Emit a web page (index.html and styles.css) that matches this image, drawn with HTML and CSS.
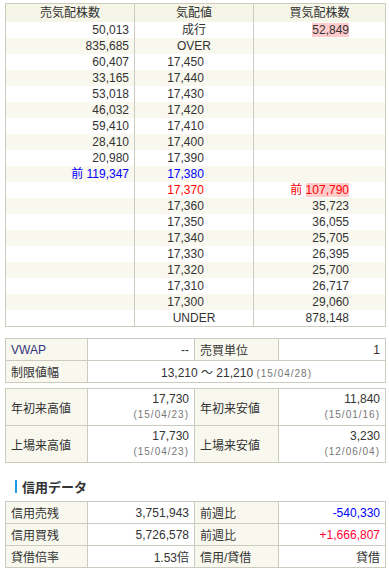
FILE: index.html
```html
<!DOCTYPE html>
<html lang="ja">
<head>
<meta charset="utf-8">
<link rel="stylesheet" href="styles.css">
</head>
<body>
<div class="wrap">
<table class="board">
  <colgroup><col class="c1"><col class="c2"><col class="c3"></colgroup>
  <thead>
    <tr><th>売気配株数</th><th>気配値</th><th>買気配株数</th></tr>
  </thead>
  <tbody>
    <tr><td class="sell">50,013</td><td class="price">成行</td><td class="buy"><span class="hl">52,849</span></td></tr>
    <tr><td class="sell">835,685</td><td class="price">OVER</td><td class="buy"></td></tr>
    <tr><td class="sell">60,407</td><td class="price"><span class="p">17,450</span></td><td class="buy"></td></tr>
    <tr><td class="sell">33,165</td><td class="price"><span class="p">17,440</span></td><td class="buy"></td></tr>
    <tr><td class="sell">53,018</td><td class="price"><span class="p">17,430</span></td><td class="buy"></td></tr>
    <tr><td class="sell">46,032</td><td class="price"><span class="p">17,420</span></td><td class="buy"></td></tr>
    <tr><td class="sell">59,410</td><td class="price"><span class="p">17,410</span></td><td class="buy"></td></tr>
    <tr><td class="sell">28,410</td><td class="price"><span class="p">17,400</span></td><td class="buy"></td></tr>
    <tr><td class="sell">20,980</td><td class="price"><span class="p">17,390</span></td><td class="buy"></td></tr>
    <tr><td class="sell blue">前 119,347</td><td class="price blue"><span class="p">17,380</span></td><td class="buy"></td></tr>
    <tr><td class="sell"></td><td class="price red"><span class="p">17,370</span></td><td class="buy red">前 <span class="hl">107,790</span></td></tr>
    <tr><td class="sell"></td><td class="price"><span class="p">17,360</span></td><td class="buy">35,723</td></tr>
    <tr><td class="sell"></td><td class="price"><span class="p">17,350</span></td><td class="buy">36,055</td></tr>
    <tr><td class="sell"></td><td class="price"><span class="p">17,340</span></td><td class="buy">25,705</td></tr>
    <tr><td class="sell"></td><td class="price"><span class="p">17,330</span></td><td class="buy">26,395</td></tr>
    <tr><td class="sell"></td><td class="price"><span class="p">17,320</span></td><td class="buy">25,700</td></tr>
    <tr><td class="sell"></td><td class="price"><span class="p">17,310</span></td><td class="buy">26,717</td></tr>
    <tr><td class="sell"></td><td class="price"><span class="p">17,300</span></td><td class="buy">29,060</td></tr>
    <tr><td class="sell"></td><td class="price">UNDER</td><td class="buy">878,148</td></tr>
  </tbody>
</table>

<table class="info info-a">
  <colgroup><col class="k1"><col class="v1"><col class="k2"><col class="v2"></colgroup>
  <tr><th class="vwap">VWAP</th><td>--</td><th>売買単位</th><td>1</td></tr>
  <tr><th>制限値幅</th><td colspan="3" class="center">13,210 〜 21,210 <span class="date">(15/04/28)</span></td></tr>
</table>

<table class="info info-b">
  <colgroup><col class="k1"><col class="v1"><col class="k2"><col class="v2"></colgroup>
  <tr><th>年初来高値</th><td><div class="num">17,730</div><div class="date">(15/04/23)</div></td><th>年初来安値</th><td><div class="num">11,840</div><div class="date">(15/01/16)</div></td></tr>
  <tr><th>上場来高値</th><td><div class="num">17,730</div><div class="date">(15/04/23)</div></td><th>上場来安値</th><td><div class="num">3,230</div><div class="date">(12/06/04)</div></td></tr>
</table>

<h2 class="heading">信用データ</h2>

<table class="info info-c">
  <colgroup><col class="k1"><col class="v1"><col class="k2"><col class="v2"></colgroup>
  <tr><th>信用売残</th><td>3,751,943</td><th>前週比</th><td class="blue">-540,330</td></tr>
  <tr><th>信用買残</th><td>5,726,578</td><th>前週比</th><td class="pink">+1,666,807</td></tr>
  <tr><th>貸借倍率</th><td>1.53倍</td><th>信用/貸借</th><td>貸借</td></tr>
</table>
</div>
</body>
</html>
```
FILE: styles.css
```css
html, body {
  margin: 0;
  background: #fff;
}
body {
  padding: 3px 0 0 5px;
  font-family: "Liberation Sans", "Noto Sans CJK JP", sans-serif;
  font-size: 12px;
  color: #333;
}
.wrap {
  width: 380px;
}
table {
  border-collapse: collapse;
  table-layout: fixed;
  width: 380px;
}
.board {
  border: 1px solid #cbcbc0;
}
.board .c1 { width: 129px; }
.board .c2 { width: 119px; }
.board .c3 { width: 132px; }
.board th,
.board td {
  border-left: 1px solid #cbcbc0;
  border-right: 1px solid #cbcbc0;
  padding: 0;
  white-space: nowrap;
}
.board th {
  height: 18px;
  line-height: 18px;
  background: #f5f5e8;
  font-weight: normal;
  text-align: center;
}
.board td {
  height: 16px;
  line-height: 16px;
}
.board tbody tr:nth-child(even) td {
  background: #f8f8ee;
}
.board .sell {
  text-align: right;
  padding-right: 5px;
}
.board .price {
  text-align: center;
}
.board .p {
  display: inline-block;
  padding-right: 17px;
}
.board .buy {
  text-align: right;
  padding-right: 36px;
}
.hl {
  background: #ffcccc;
}
.blue { color: #0000ff; }
.red { color: #ff0000; }
.pink { color: #ff0033; }

.info {
  border: 1px solid #cbcbc0;
}
.info .k1 { width: 82px; }
.info .v1 { width: 107px; }
.info .k2 { width: 84px; }
.info .v2 { width: 107px; }
.info th,
.info td {
  border: 1px solid #cbcbc0;
  padding: 0 5px;
  white-space: nowrap;
}
.info th {
  background: #f8f8ee;
  font-weight: normal;
  text-align: left;
}
.info td {
  background: #fff;
  text-align: right;
}
.info td.center {
  text-align: center;
}
.info-a {
  margin-top: 11px;
}
.info-a th,
.info-a td {
  height: 21px;
}
.vwap {
  color: #33357a;
}
.date {
  font-size: 10px;
  letter-spacing: 1px;
  color: #777;
}
.info-b {
  margin-top: 5px;
}
.info-b th,
.info-b td {
  height: 36px;
  padding-top: 0;
  padding-bottom: 0;
}
.info-b .num {
  line-height: 16px;
  height: 16px;
}
.info-b .date {
  line-height: 16px;
  height: 16px;
}
.heading {
  margin: 17px 0 8px 10px;
  padding-left: 5px;
  border-left: 2px solid #1a9be6;
  font-family: "Noto Sans CJK JP", sans-serif;
  font-size: 13px;
  line-height: 13px;
  height: 13px;
  font-weight: bold;
  color: #333;
}
.info-c th,
.info-c td {
  height: 21px;
}
```
